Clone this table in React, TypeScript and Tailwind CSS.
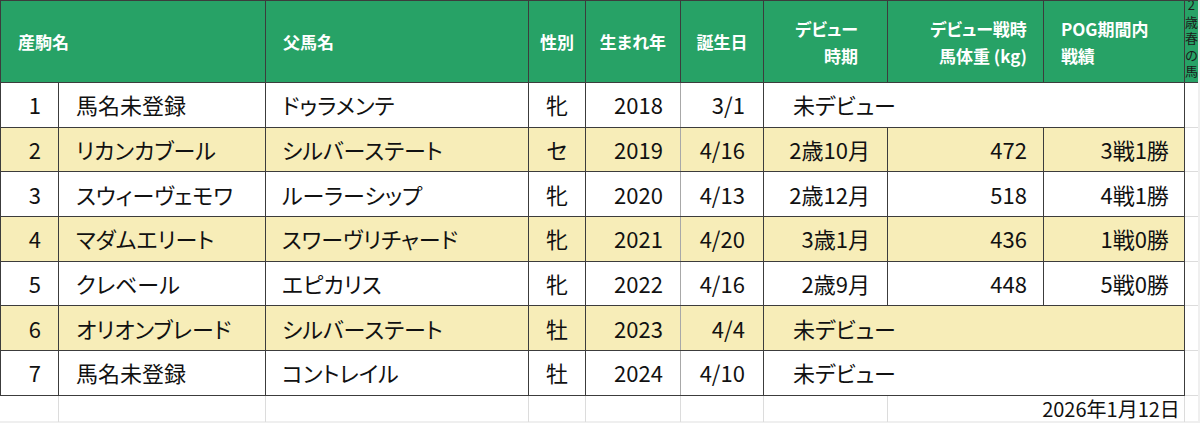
const rows = [
  { no: 1, name: "馬名未登録", sire: "ドゥラメンテ", sex: "牝", year: "2018", bday: "3/1" },
  { no: 2, name: "リカンカブール", sire: "シルバーステート", sex: "セ", year: "2019", bday: "4/16", debut: "2歳10月", weight: "472", record: "3戦1勝" },
  { no: 3, name: "スウィーヴェモワ", sire: "ルーラーシップ", sex: "牝", year: "2020", bday: "4/13", debut: "2歳12月", weight: "518", record: "4戦1勝" },
  { no: 4, name: "マダムエリート", sire: "スワーヴリチャード", sex: "牝", year: "2021", bday: "4/20", debut: "3歳1月", weight: "436", record: "1戦0勝" },
  { no: 5, name: "クレベール", sire: "エピカリス", sex: "牝", year: "2022", bday: "4/16", debut: "2歳9月", weight: "448", record: "5戦0勝" },
  { no: 6, name: "オリオンブレード", sire: "シルバーステート", sex: "牡", year: "2023", bday: "4/4" },
  { no: 7, name: "馬名未登録", sire: "コントレイル", sex: "牡", year: "2024", bday: "4/10" },
];

const cell = "border border-[#3c3c3c] p-0";
const th = "border border-[#3c3c3c] p-0 font-bold text-white text-[17px] leading-[27px]";
const vertical = ["2", "歳", "春", "の", "馬"];

export default function App() {
  return (
    <div className="w-[1200px] h-[423px] overflow-hidden bg-[#efefef] font-['Noto_Sans_CJK_JP',sans-serif] [font-feature-settings:'palt'] text-[#111]">
      <div className="bg-white h-[421px] w-[1198px]">
        <table className="table-fixed border-collapse">
          <colgroup>
            <col className="w-[58px]" />
            <col className="w-[207px]" />
            <col className="w-[263px]" />
            <col className="w-[57px]" />
            <col className="w-[95px]" />
            <col className="w-[83px]" />
            <col className="w-[124px]" />
            <col className="w-[156px]" />
            <col className="w-[141px]" />
            <col className="w-[13px]" />
          </colgroup>
          <thead>
            <tr className="h-[82px] bg-[#27a266]">
              <th colSpan={2} className={`${th} text-left pl-[17px]`}>産駒名</th>
              <th className={`${th} text-left pl-[17px]`}>父馬名</th>
              <th className={`${th} text-center`}>性別</th>
              <th className={`${th} text-center`}>生まれ年</th>
              <th className={`${th} text-center`}>誕生日</th>
              <th className={`${th} text-right pr-[29px]`}>
                デビュー
                <br />
                時期
              </th>
              <th className={`${th} text-right pr-[16px]`}>
                デビュー戦時
                <br />
                馬体重 (kg)
              </th>
              <th className={`${th} text-left pl-[17px]`}>
                POG期間内
                <br />
                戦績
              </th>
              <th className="border-y border-l border-[#3c3c3c] p-0 align-top">
                <div className="h-[81px] overflow-hidden">
                  <div className="-mt-[4px]">
                    {vertical.map((c) => (
                      <div key={c} className="text-center text-[13px] leading-[16.5px] font-normal text-[#1a1a1a]">
                        {c}
                      </div>
                    ))}
                  </div>
                </div>
              </th>
            </tr>
          </thead>
          <tbody className="text-[22px]">
            {rows.map((r) => (
              <tr key={r.no} className={`h-[44.7px] ${r.no % 2 === 0 ? "bg-[#f7edb8]" : "bg-white"}`}>
                <td className={`${cell} text-right pr-[17px]`}>{r.no}</td>
                <td className={`${cell} pl-[17px] whitespace-nowrap`}>{r.name}</td>
                <td className={`${cell} pl-[16px] whitespace-nowrap`}>{r.sire}</td>
                <td className={`${cell} text-center`}>{r.sex}</td>
                <td className={`${cell} text-right pr-[17px] border-r-[#a8a8a8]`}>{r.year}</td>
                <td className={`${cell} text-right pr-[18px]`}>{r.bday}</td>
                {r.debut ? (
                  <>
                    <td className={`${cell} text-right pr-[17px] whitespace-nowrap`}>{r.debut}</td>
                    <td className={`${cell} text-right pr-[16px]`}>{r.weight}</td>
                    <td className={`${cell} text-right pr-[15px] whitespace-nowrap`}>{r.record}</td>
                  </>
                ) : (
                  <td colSpan={3} className={`${cell} pl-[29px] whitespace-nowrap`}>
                    未デビュー
                  </td>
                )}
                <td className="border-l border-l-[#3c3c3c] border-b border-b-[#dcdcdc] bg-white p-0"></td>
              </tr>
            ))}
            <tr className="h-[26px] text-[20px]">
              <td className="border-r border-[#dcdcdc] border-t-[#3c3c3c] border-t p-0"></td>
              <td className="border-r border-[#dcdcdc] border-t-[#3c3c3c] border-t p-0"></td>
              <td className="border-r border-[#dcdcdc] border-t-[#3c3c3c] border-t p-0"></td>
              <td className="border-r border-[#dcdcdc] border-t-[#3c3c3c] border-t p-0"></td>
              <td className="border-r border-[#dcdcdc] border-t-[#3c3c3c] border-t p-0"></td>
              <td className="border-r border-[#dcdcdc] border-t-[#3c3c3c] border-t p-0"></td>
              <td className="border-r border-[#dcdcdc] border-t-[#3c3c3c] border-t p-0"></td>
              <td colSpan={2} className="border-r border-[#dcdcdc] border-t-[#3c3c3c] border-t p-0 text-right pr-[4px] leading-[26px] whitespace-nowrap">
                2026年1月12日
              </td>
              <td className="p-0"></td>
            </tr>
          </tbody>
        </table>
      </div>
    </div>
  );
}
